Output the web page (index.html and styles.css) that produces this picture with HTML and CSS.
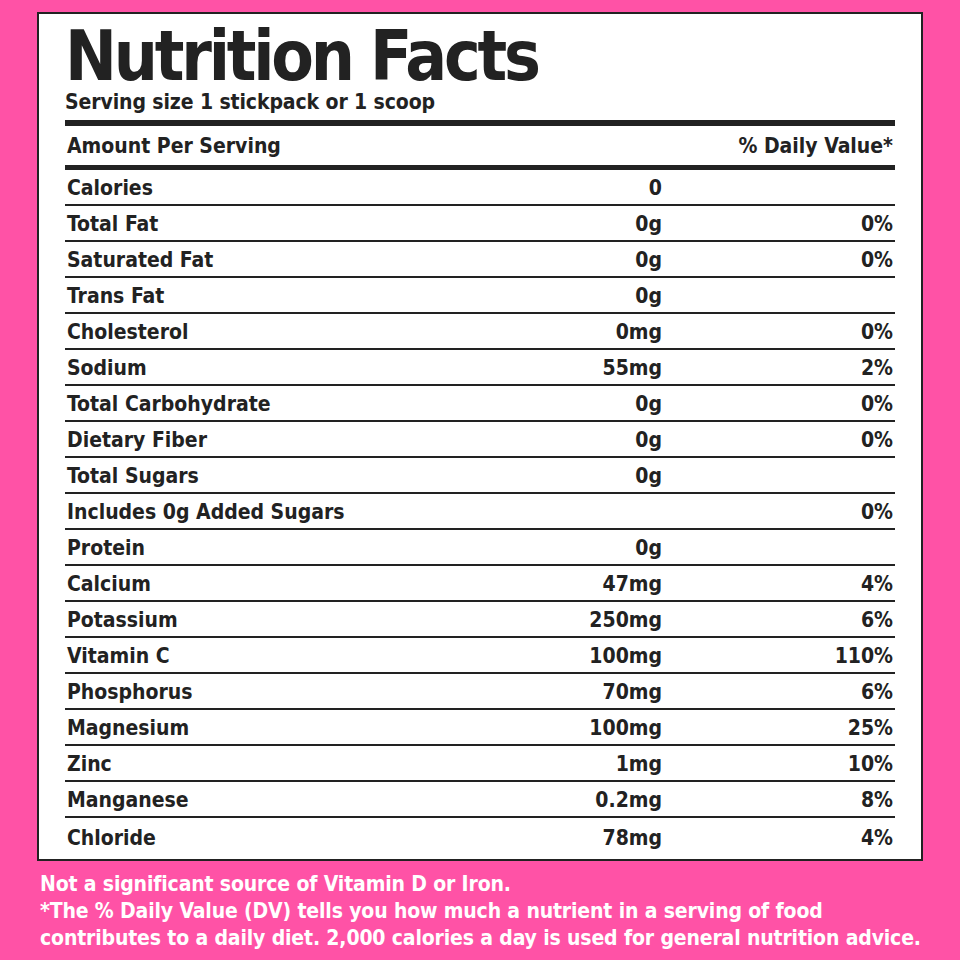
FILE: index.html
```html
<!DOCTYPE html>
<html>
<head>
<meta charset="utf-8">
<link rel="stylesheet" href="styles.css">
</head>
<body>
<div class="page">
  <div class="label">
    <h1 class="title">Nutrition Facts</h1>
    <div class="serving">Serving size 1 stickpack or 1 scoop</div>
    <div class="bar thick"></div>
    <div class="head-row">
      <span>Amount Per Serving</span>
      <span>% Daily Value*</span>
    </div>
    <div class="bar medium"></div>
    <div class="rows">
      <div class="row"><span>Calories</span><span class="val">0</span><span class="pct"></span></div>
      <div class="row"><span>Total Fat</span><span class="val">0g</span><span class="pct">0%</span></div>
      <div class="row"><span>Saturated Fat</span><span class="val">0g</span><span class="pct">0%</span></div>
      <div class="row"><span>Trans Fat</span><span class="val">0g</span><span class="pct"></span></div>
      <div class="row"><span>Cholesterol</span><span class="val">0mg</span><span class="pct">0%</span></div>
      <div class="row"><span>Sodium</span><span class="val">55mg</span><span class="pct">2%</span></div>
      <div class="row"><span>Total Carbohydrate</span><span class="val">0g</span><span class="pct">0%</span></div>
      <div class="row"><span>Dietary Fiber</span><span class="val">0g</span><span class="pct">0%</span></div>
      <div class="row"><span>Total Sugars</span><span class="val">0g</span><span class="pct"></span></div>
      <div class="row"><span>Includes 0g Added Sugars</span><span class="val"></span><span class="pct">0%</span></div>
      <div class="row"><span>Protein</span><span class="val">0g</span><span class="pct"></span></div>
      <div class="row"><span>Calcium</span><span class="val">47mg</span><span class="pct">4%</span></div>
      <div class="row"><span>Potassium</span><span class="val">250mg</span><span class="pct">6%</span></div>
      <div class="row"><span>Vitamin C</span><span class="val">100mg</span><span class="pct">110%</span></div>
      <div class="row"><span>Phosphorus</span><span class="val">70mg</span><span class="pct">6%</span></div>
      <div class="row"><span>Magnesium</span><span class="val">100mg</span><span class="pct">25%</span></div>
      <div class="row"><span>Zinc</span><span class="val">1mg</span><span class="pct">10%</span></div>
      <div class="row"><span>Manganese</span><span class="val">0.2mg</span><span class="pct">8%</span></div>
      <div class="row last"><span>Chloride</span><span class="val">78mg</span><span class="pct">4%</span></div>
    </div>
  </div>
  <div class="footer">
    <p>Not a significant source of Vitamin D or Iron.</p>
    <p>*The % Daily Value (DV) tells you how much a nutrient in a serving of food contributes to a daily diet. 2,000 calories a day is used for general nutrition advice.</p>
  </div>
</div>
</body>
</html>
```

FILE: styles.css
```css
html, body {
  margin: 0;
  padding: 0;
}
body {
  background: #ff52a6;
  font-family: "DejaVu Sans Condensed", "DejaVu Sans", sans-serif;
  font-weight: bold;
  color: #222;
}
.page {
  width: 960px;
  height: 960px;
  padding-top: 12px;
  box-sizing: border-box;
}
.label {
  margin-left: 37px;
  width: 886px;
  box-sizing: border-box;
  border: 2px solid #222;
  background: #fff;
  padding: 0 26px 0 26px;
}
.title {
  margin: 0;
  font-size: 69px;
  line-height: 68px;
  height: 68px;
  padding-top: 8px;
  font-weight: bold;
  letter-spacing: -3.2px;
  white-space: nowrap;
}
.serving {
  font-size: 21px;
  line-height: 25px;
  height: 30px;
  letter-spacing: -0.1px;
}
.bar {
  background: #222;
}
.bar.thick {
  height: 6px;
}
.bar.medium {
  height: 5px;
}
.head-row {
  display: flex;
  justify-content: space-between;
  font-size: 21px;
  height: 37px;
  line-height: 37px;
  padding: 2px 2px 0 2px;
}
.row {
  display: grid;
  grid-template-columns: 1fr 150px 233px;
  height: 32px;
  line-height: 32px;
  padding-top: 2px;
  font-size: 21px;
  border-bottom: 2px solid #222;
  padding-left: 2px;
}
.row.last {
  border-bottom: none;
  height: 39px;
  line-height: 36px;
}
.val {
  text-align: right;
}
.pct {
  text-align: right;
  padding-right: 2px;
}
.footer {
  color: #fff;
  padding-left: 40px;
  padding-top: 10px;
  font-size: 21px;
  line-height: 27px;
  letter-spacing: -0.15px;
  width: 900px;
}
.footer p {
  margin: 0;
}
```
